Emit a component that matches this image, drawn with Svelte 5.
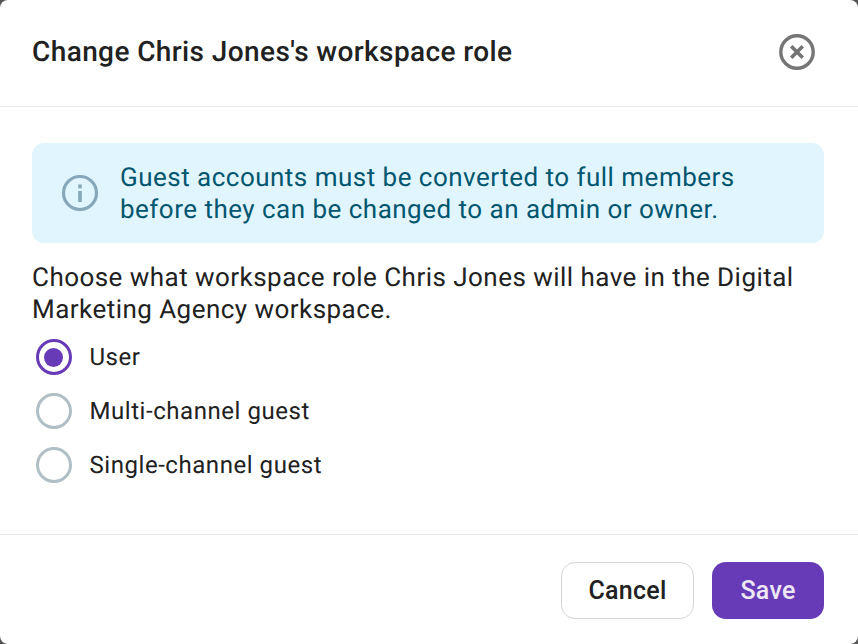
<script lang="ts">
  const roles = ['User', 'Multi-channel guest', 'Single-channel guest'];
  let selected = $state('User');
</script>

<div class="modal">
  <header class="modal-header">
    <h2>Change Chris Jones's workspace role</h2>
    <button class="close" aria-label="Close">
      <svg width="38" height="38" viewBox="0 0 38 38" fill="none" stroke="#757575">
        <circle cx="19" cy="19" r="16.2" stroke-width="3.4" />
        <path d="M13.2 13.2 L24.8 24.8 M24.8 13.2 L13.2 24.8" stroke-width="3.6" />
      </svg>
    </button>
  </header>

  <div class="modal-body">
    <div class="notice">
      <svg class="notice-icon" width="38" height="38" viewBox="0 0 38 38" fill="none">
        <circle cx="19" cy="19" r="16.5" stroke="#86a8ba" stroke-width="3.2" />
        <rect x="17.2" y="17" width="3.6" height="11" fill="#86a8ba" />
        <rect x="17.2" y="10.5" width="3.6" height="3.8" fill="#86a8ba" />
      </svg>
      <p>Guest accounts must be converted to full members<br />before they can be changed to an admin or owner.</p>
    </div>

    <p class="intro">Choose what workspace role Chris Jones will have in the Digital Marketing Agency workspace.</p>

    <div class="roles">
      {#each roles as role}
        <label class="role">
          <input type="radio" name="role" value={role} bind:group={selected} />
          <span class="radio"></span>
          <span>{role}</span>
        </label>
      {/each}
    </div>
  </div>

  <footer class="modal-footer">
    <button class="btn cancel">Cancel</button>
    <button class="btn save">Save</button>
  </footer>
</div>

<style>
  :global(body) {
    background: #555;
  }

  .modal {
    width: 858px;
    height: 644px;
    display: flex;
    flex-direction: column;
    background: #fff;
    border-radius: 8px;
    color: #212121;
    font-family: Roboto, sans-serif;
    text-rendering: geometricPrecision;
  }

  .modal-header {
    height: 107px;
    flex: none;
    display: flex;
    align-items: center;
    justify-content: space-between;
    padding: 0 42.5px 3px 32px;
    box-sizing: border-box;
    border-bottom: 1px solid #e8e8e8;
  }

  h2 {
    margin: 0;
    font-size: 28px;
    font-weight: 500;
    letter-spacing: 0.4px;
  }

  .close {
    padding: 0;
    border: 0;
    background: none;
    display: flex;
  }

  .modal-body {
    flex: 1;
    padding: 36px 34px 0 32px;
  }

  .notice {
    height: 100px;
    display: flex;
    align-items: center;
    gap: 21px;
    padding-left: 29px;
    box-sizing: border-box;
    background: #e1f5fe;
    border-radius: 12px;
    color: #01566f;
  }

  .notice-icon {
    flex: none;
  }

  .notice p {
    margin: 0;
    padding-top: 2px;
    font-size: 26px;
    line-height: 32px;
    letter-spacing: 0.48px;
  }

  .intro {
    margin: 19px 0 0;
    font-size: 26px;
    line-height: 32px;
    letter-spacing: 0.46px;
  }

  .roles {
    display: flex;
    flex-direction: column;
    gap: 18px;
    margin-top: 13px;
  }

  .role {
    height: 36px;
    display: flex;
    align-items: center;
    gap: 18px;
    padding-left: 3.5px;
    font-size: 24px;
    letter-spacing: 0.55px;
  }

  .role input {
    display: none;
  }

  .radio {
    width: 36px;
    height: 36px;
    box-sizing: border-box;
    border: 3.5px solid #b0bec5;
    border-radius: 50%;
    display: flex;
    align-items: center;
    justify-content: center;
  }

  input:checked + .radio {
    border-color: #673ab7;
  }

  input:checked + .radio::after {
    content: '';
    width: 19px;
    height: 19px;
    border-radius: 50%;
    background: #673ab7;
  }

  .modal-footer {
    height: 110px;
    flex: none;
    display: flex;
    justify-content: flex-end;
    gap: 18px;
    padding: 27px 34px 0 0;
    box-sizing: border-box;
    border-top: 1px solid #e8e8e8;
  }

  .btn {
    height: 57px;
    border-radius: 14px;
    font-family: inherit;
    font-size: 25px;
    font-weight: 500;
    letter-spacing: 0.25px;
  }

  .cancel {
    width: 133px;
    background: #fff;
    border: 1px solid #d6d6d6;
    color: #212121;
  }

  .save {
    width: 112px;
    background: #673ab7;
    border: 0;
    color: #ede7f6;
  }
</style>
